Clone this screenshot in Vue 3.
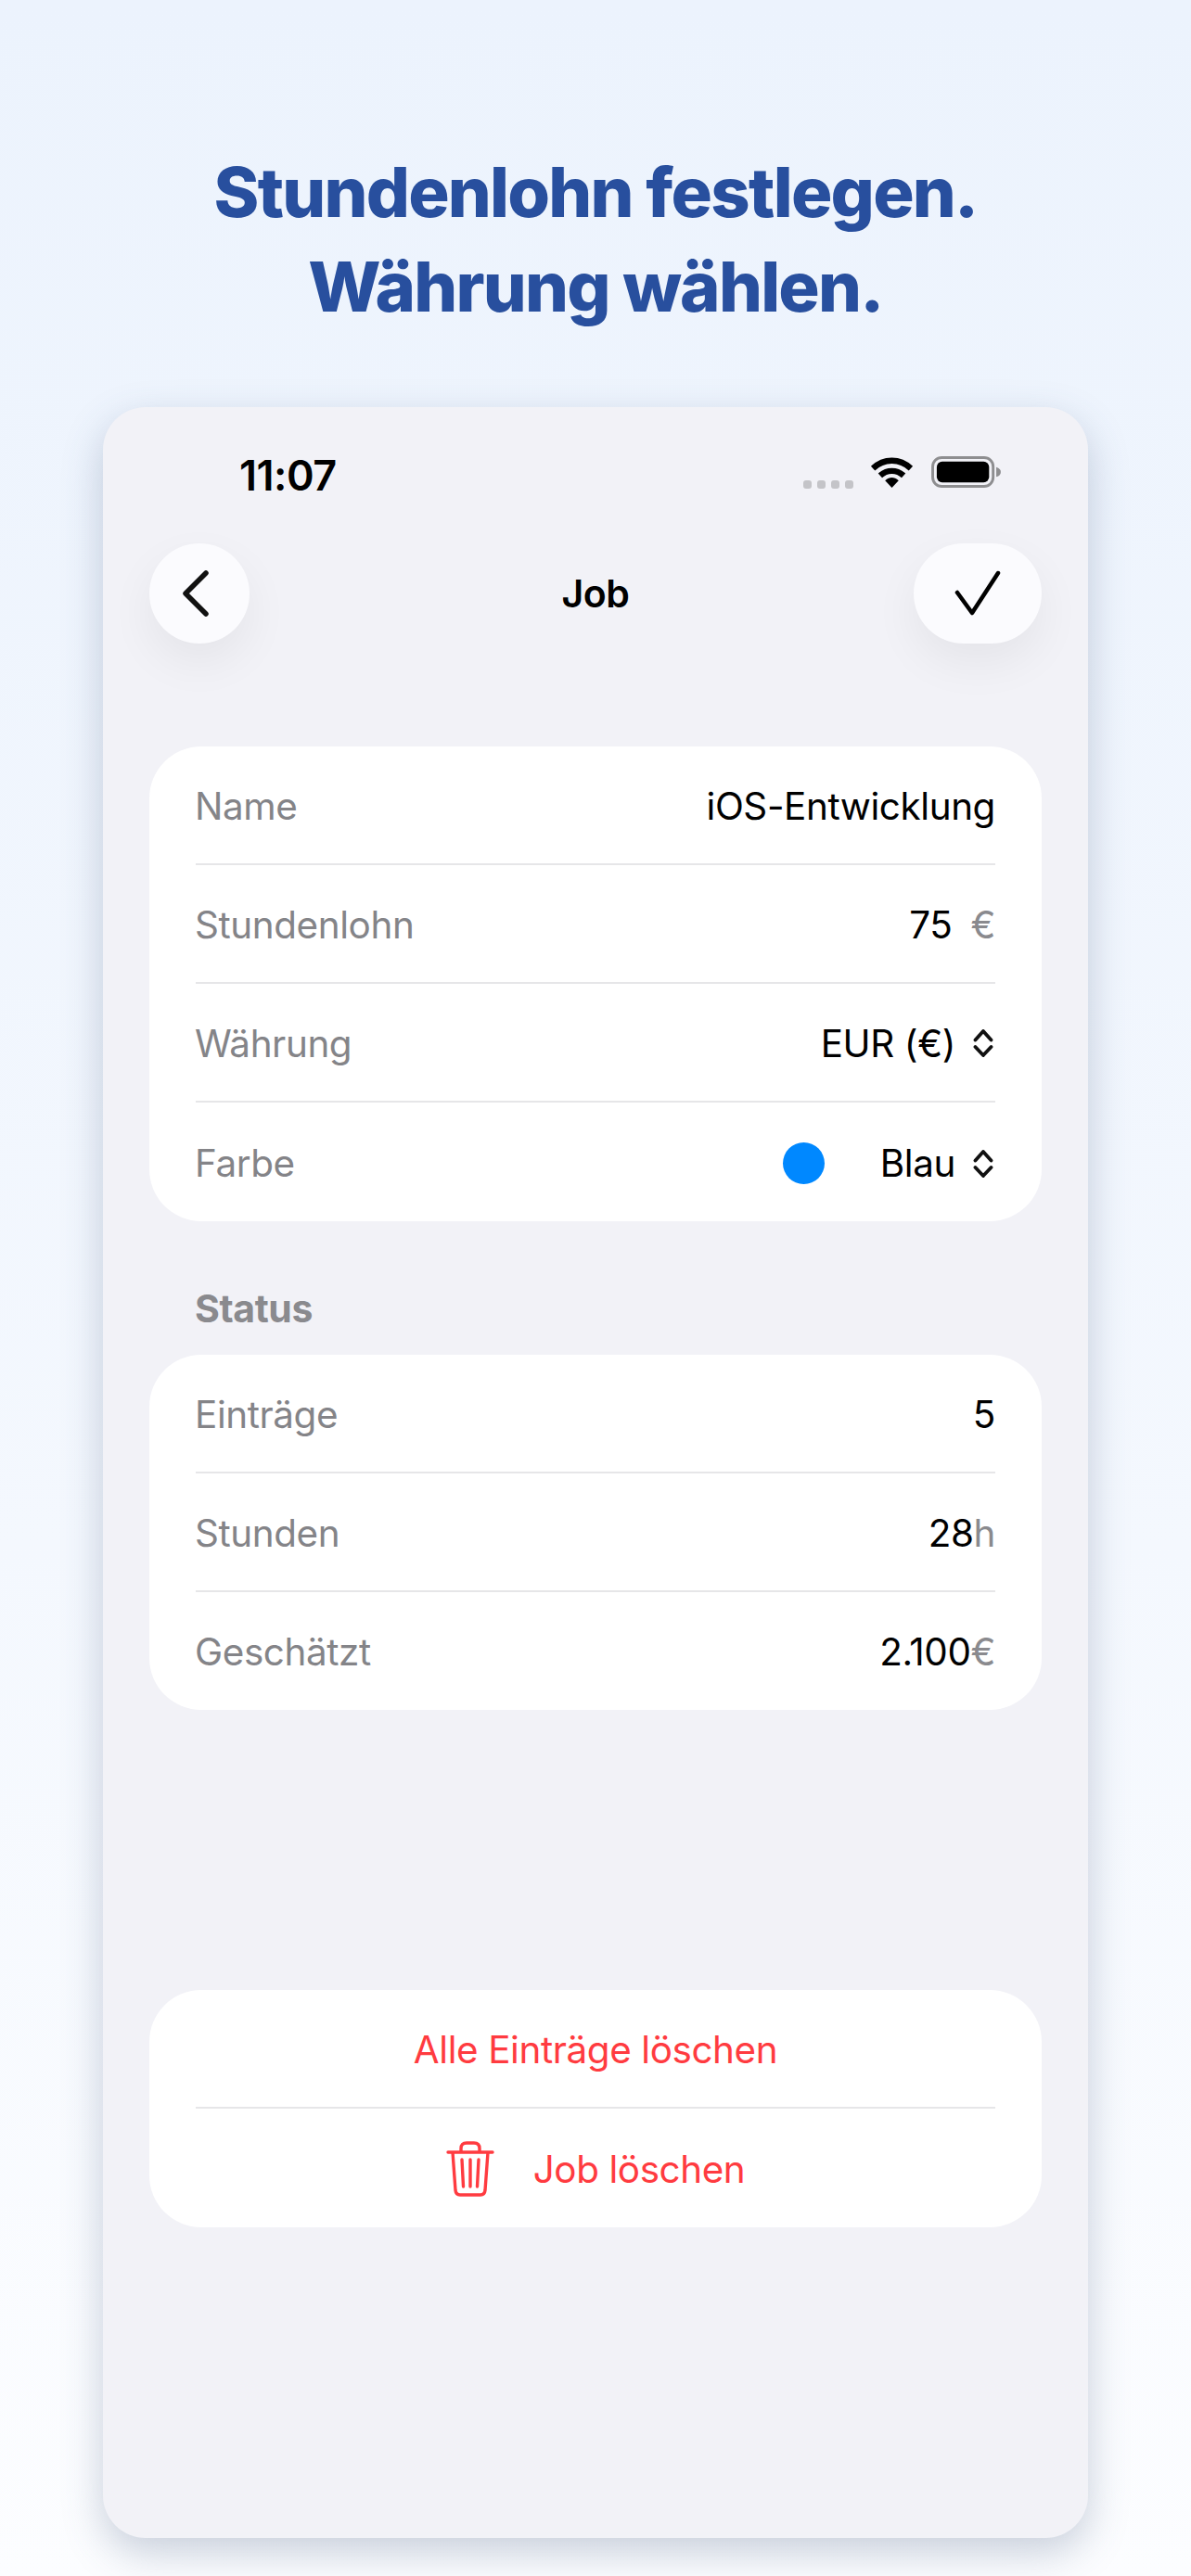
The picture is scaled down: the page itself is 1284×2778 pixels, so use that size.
<script setup>
const mainRows = [
  { label: 'Name', value: 'iOS-Entwicklung' },
  { label: 'Stundenlohn', value: '75', unit: '€', gap: true },
  { label: 'Währung', value: 'EUR (€)', picker: true },
  { label: 'Farbe', value: 'Blau', picker: true, dot: true }
]
const statusRows = [
  { label: 'Einträge', value: '5' },
  { label: 'Stunden', value: '28', unit: 'h' },
  { label: 'Geschätzt', value: '2.100', unit: '€' }
]
</script>

<template>
  <div class="page">
    <h1 class="title">Stundenlohn festlegen.<br />Währung wählen.</h1>
    <div class="phone">
      <div class="status-bar">
        <span class="time">11:07</span>
        <div class="status-icons">
          <div class="signal"><i></i><i></i><i></i><i></i></div>
          <svg class="wifi" width="47" height="34" viewBox="0 0 48 35">
            <path d="M3 12.500C15 1 33 1 45 12.500" fill="none" stroke="#000" stroke-width="6.500" />
            <path d="M11 20.500C18.500 13.500 29.500 13.500 37 20.500" fill="none" stroke="#000" stroke-width="6.500" />
            <path d="M16.500 26C21.500 21.500 26.500 21.500 31.500 26L24 34Z" fill="#000" />
          </svg>
          <svg class="battery" width="78" height="35" viewBox="0 0 78 36">
            <rect x="1.500" y="1.500" width="67" height="32" rx="10" fill="none" stroke="#8e8e90" stroke-width="3" />
            <rect x="6" y="6" width="58" height="23" rx="6" fill="#000" />
            <path d="M72 12C75.500 13 77 15 77 17.500C77 20 75.500 22 72 23Z" fill="#8e8e90" />
          </svg>
        </div>
      </div>

      <div class="nav">
        <button class="round back">
          <svg width="30" height="50" viewBox="0 0 30 50">
            <path d="M26 3L4 25L26 47" fill="none" stroke="#111" stroke-width="5.500" stroke-linecap="round" stroke-linejoin="round" />
          </svg>
        </button>
        <span class="nav-title">Job</span>
        <button class="round check">
          <svg width="50" height="50" viewBox="0 0 50 50">
            <path d="M3 24L19 46L47 3" fill="none" stroke="#000" stroke-width="4.500" stroke-linecap="round" stroke-linejoin="round" />
          </svg>
        </button>
      </div>

      <section class="card first">
        <div v-for="row in mainRows" :key="row.label" class="row">
          <span class="label">{{ row.label }}</span>
          <span class="value">
            <i v-if="row.dot" class="dot"></i>
            <span>{{ row.value }}</span>
            <span v-if="row.unit" class="unit" :class="{ spaced: row.gap }">{{ row.unit }}</span>
            <svg v-if="row.picker" class="updown" width="22" height="30" viewBox="0 0 22 30">
              <path d="M2.500 11.500L11 2L19.500 11.500M2.500 19L11 28L19.500 19" fill="none" stroke="#111" stroke-width="3.800" stroke-linecap="round" stroke-linejoin="round" />
            </svg>
          </span>
        </div>
      </section>

      <h2 class="section-label">Status</h2>
      <section class="card">
        <div v-for="row in statusRows" :key="row.label" class="row">
          <span class="label">{{ row.label }}</span>
          <span class="value">
            <span>{{ row.value }}</span>
            <span v-if="row.unit" class="unit">{{ row.unit }}</span>
          </span>
        </div>
      </section>

      <section class="card danger">
        <div class="row center"><span>Alle Einträge löschen</span></div>
        <div class="row center">
          <svg class="trash" width="52" height="60" viewBox="0 0 52 60">
            <path d="M2 12H50M16 12V8C16 4 18 2 22 2H30C34 2 36 4 36 8V12M7 12L10 53C10.300 56 12 58 15 58H37C40 58 41.700 56 42 53L45 12M17 20L18.500 49M26 20V49M35 20L33.500 49" fill="none" stroke="#ff3b40" stroke-width="3.400" stroke-linecap="round" stroke-linejoin="round" />
          </svg>
          <span>Job löschen</span>
        </div>
      </section>
    </div>
  </div>
</template>

<style>
html, body { margin: 0; padding: 0; }
</style>

<style scoped>
.page {
  width: 1284px;
  height: 2778px;
  overflow: hidden;
  box-sizing: border-box;
  padding-top: 156px;
  display: flex;
  flex-direction: column;
  align-items: center;
  background: linear-gradient(180deg, #ecf3fd 0%, #f4f8fe 60%, #fcfdff 100%);
  font-family: Inter, "Liberation Sans", sans-serif;
}
.title {
  margin: 0 0 79px;
  font-size: 74px;
  line-height: 102px;
  font-weight: 800;
  letter-spacing: -1.750px;
  text-align: center;
  color: #284f9e;
}
.phone {
  width: 1062px;
  height: 2298px;
  box-sizing: border-box;
  flex: none;
  padding: 0 50px;
  border-radius: 46px;
  background: #f2f2f7;
  box-shadow: 0 16px 44px rgba(70, 90, 125, 0.28);
}
.status-bar {
  height: 147px;
  display: flex;
  justify-content: space-between;
  align-items: flex-start;
  padding-top: 48px;
  box-sizing: border-box;
}
.time {
  margin-left: 97px;
  font-size: 45px;
  line-height: 52px;
  font-weight: 600;
  letter-spacing: -0.500px;
  color: #000;
}
.status-icons {
  display: flex;
  align-items: flex-end;
  height: 40px;
  margin-right: 42px;
  gap: 18px;
}
.signal { display: flex; gap: 6px; }
.signal i { width: 9px; height: 9px; border-radius: 3px; background: #c4c4c8; }
.nav {
  display: grid;
  grid-template-columns: 1fr auto 1fr;
  align-items: center;
  height: 108px;
}
.round {
  height: 108px;
  border: 0;
  padding: 0;
  border-radius: 54px;
  background: #fbfbfe;
  box-shadow: 0 20px 50px rgba(0, 0, 0, 0.06);
  display: flex;
  align-items: center;
  justify-content: center;
}
.back { width: 108px; padding-right: 8px; }
.check { width: 138px; justify-self: end; }
.nav-title {
  font-size: 41px;
  font-weight: 600;
  letter-spacing: -0.500px;
  color: #000;
}
.card {
  background: #fff;
  border-radius: 56px;
  padding: 0 50px;
}
.first { margin-top: 111px; }
.row {
  height: 128px;
  display: flex;
  align-items: center;
  justify-content: space-between;
  box-sizing: border-box;
  padding-top: 2px;
  border-bottom: 2px solid #e6e6e8;
  font-size: 40.400px;
  letter-spacing: -0.400px;
}
.row:last-child { border-bottom: 0; height: 127px; }
.first .row:last-child { height: 128px; padding-top: 3px; }
.label { color: #848488; margin-left: -1px; }
.value { display: flex; align-items: center; color: #000; }
.unit { color: #8a8a8e; }
.unit.spaced { margin-left: 20px; }
.dot {
  width: 45px;
  height: 45px;
  border-radius: 50%;
  background: #0088ff;
  margin-right: 60px;
}
.updown { margin-left: 19px; margin-right: 2px; }
.section-label {
  margin: 70px 0 0 0;
  padding-left: 49px;
  height: 74px;
  font-size: 41px;
  line-height: 48px;
  font-weight: 700;
  letter-spacing: -0.400px;
  color: #8a8a8e;
}
.danger { margin-top: 302px; }
.danger .row:last-child { height: 128px; }
.center { justify-content: center; color: #ff3b40; }
.trash { margin-right: 42px; }
</style>
